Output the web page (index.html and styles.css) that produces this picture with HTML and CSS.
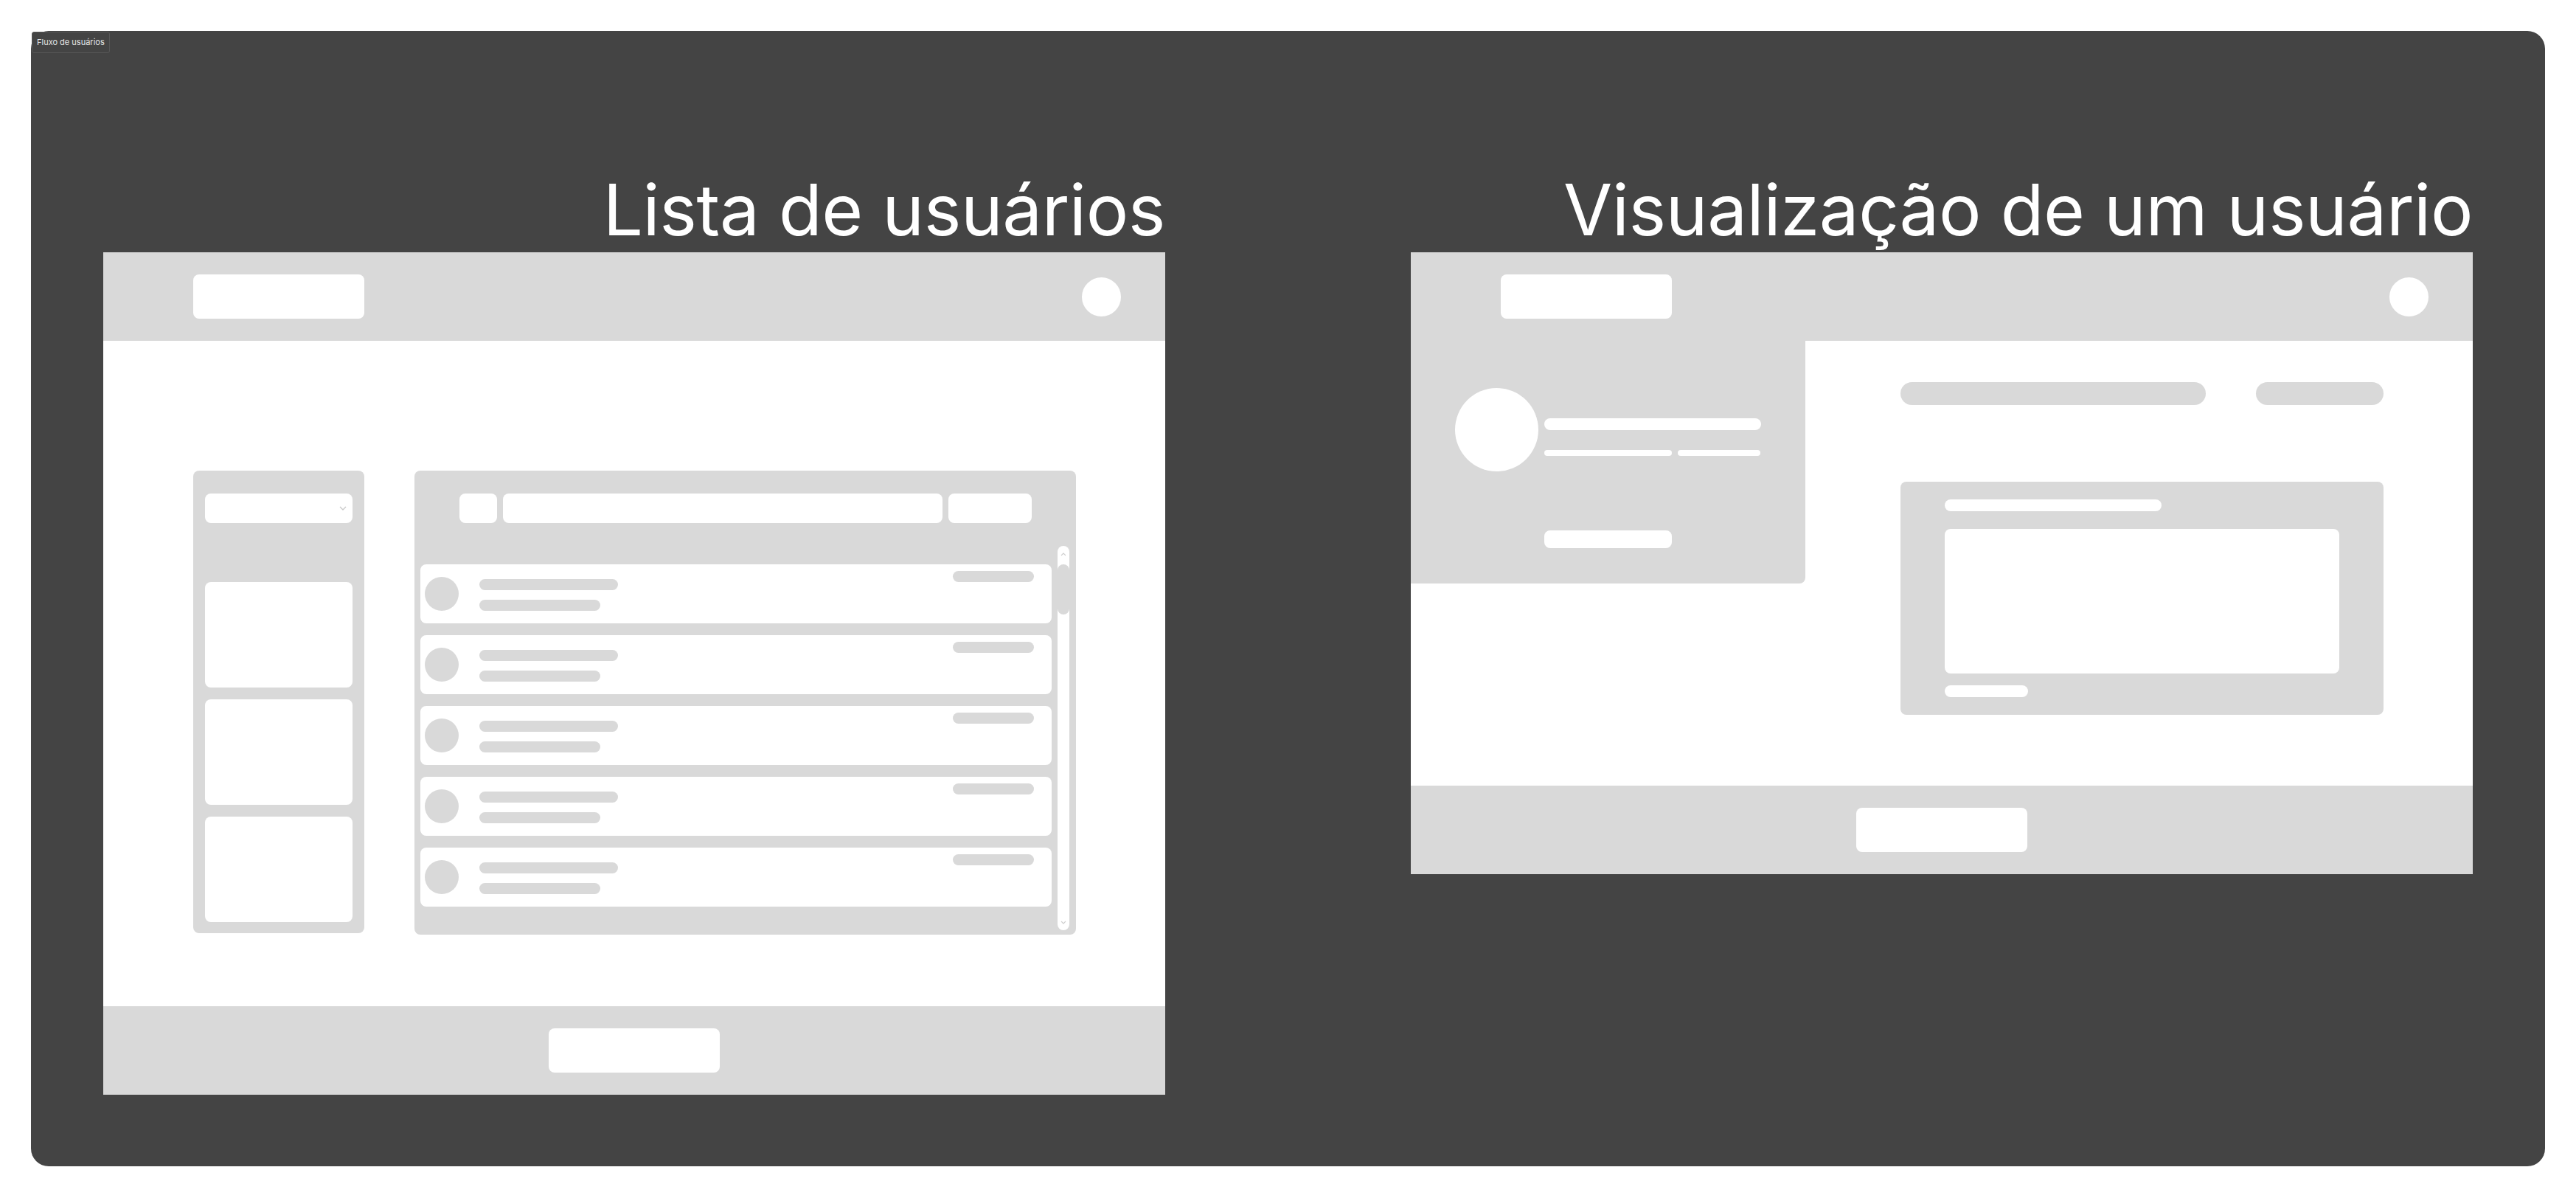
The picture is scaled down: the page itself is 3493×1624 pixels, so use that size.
FILE: index.html
```html
<!DOCTYPE html>
<html lang="pt-BR">
  <head>
    <meta charset="UTF-8" />
    <meta name="viewport" content="width=device-width, initial-scale=1.0" />
    <title>Fluxo de usuários</title>
    <link rel="stylesheet" href="styles.css">
  </head>
  <body>
    <div class="board">
      <div class="board-label">Fluxo de usuários</div>

      <!-- lista de usuarios -->
      <div class="column">
        <h1 class="screen-title">Lista de usuários</h1>
        <div class="mock">
          <div class="mock-header">
            <div class="logo"></div>
            <div class="avatar-sm"></div>
          </div>

          <div class="list-body">
            <div class="sidebar">
              <div class="select">
                <svg width="10" height="6" viewBox="0 0 10 6"><path d="M1 1l4 4 4-4" fill="none" stroke="#c9c9c9" stroke-width="1.3"/></svg>
              </div>
              <div class="side-cards">
                <div class="side-card"></div>
                <div class="side-card"></div>
                <div class="side-card"></div>
              </div>
            </div>

            <div class="list-panel">
              <div class="toolbar">
                <div class="tool-btn"></div>
                <div class="search"></div>
                <div class="tool-action"></div>
              </div>
              <div class="list-scroll">
                <div class="items">
                  <div class="item">
                    <div class="item-avatar"></div>
                    <div class="item-lines"><span class="ln ln-name"></span><span class="ln ln-sub"></span></div>
                    <span class="ln ln-tag"></span>
                  </div>
                  <div class="item">
                    <div class="item-avatar"></div>
                    <div class="item-lines"><span class="ln ln-name"></span><span class="ln ln-sub"></span></div>
                    <span class="ln ln-tag"></span>
                  </div>
                  <div class="item">
                    <div class="item-avatar"></div>
                    <div class="item-lines"><span class="ln ln-name"></span><span class="ln ln-sub"></span></div>
                    <span class="ln ln-tag"></span>
                  </div>
                  <div class="item">
                    <div class="item-avatar"></div>
                    <div class="item-lines"><span class="ln ln-name"></span><span class="ln ln-sub"></span></div>
                    <span class="ln ln-tag"></span>
                  </div>
                  <div class="item">
                    <div class="item-avatar"></div>
                    <div class="item-lines"><span class="ln ln-name"></span><span class="ln ln-sub"></span></div>
                    <span class="ln ln-tag"></span>
                  </div>
                </div>
                <div class="scrollbar">
                  <svg class="arrow" width="8" height="5" viewBox="0 0 8 5"><path d="M1 4l3-3 3 3" fill="none" stroke="#cfcfcf" stroke-width="1.2"/></svg>
                  <div class="thumb"></div>
                  <svg class="arrow arrow-down" width="8" height="5" viewBox="0 0 8 5"><path d="M1 1l3 3 3-3" fill="none" stroke="#cfcfcf" stroke-width="1.2"/></svg>
                </div>
              </div>
            </div>
          </div>

          <div class="mock-footer">
            <div class="footer-btn"></div>
          </div>
        </div>
      </div>

      <!-- visualizacao de um usuario -->
      <div class="column">
        <h1 class="screen-title">Visualização de um usuário</h1>
        <div class="mock">
          <div class="mock-header">
            <div class="logo"></div>
            <div class="avatar-sm"></div>
          </div>

          <div class="detail-body">
            <div class="profile">
              <div class="profile-avatar"></div>
              <div class="profile-info">
                <span class="pl pl-name"></span>
                <div class="pl-row">
                  <span class="pl pl-a"></span>
                  <span class="pl pl-b"></span>
                </div>
                <div class="profile-btn"></div>
              </div>
            </div>

            <div class="detail-content">
              <div class="bars">
                <span class="bar bar-wide"></span>
                <span class="bar bar-short"></span>
              </div>
              <div class="form-card">
                <span class="fc-line fc-label"></span>
                <div class="fc-area"></div>
                <span class="fc-line fc-foot"></span>
              </div>
            </div>
          </div>

          <div class="mock-footer">
            <div class="footer-btn"></div>
          </div>
        </div>
      </div>
    </div>
  </body>
</html>
```

FILE: styles.css
```css
body {
  margin: 0;
  background: #ffffff;
  font-family: Inter, "Noto Sans", sans-serif;
}

.board {
  position: relative;
  box-sizing: border-box;
  width: 3409px;
  height: 1539px;
  margin: 42px;
  padding: 194px 0 0 98px;
  background: #444444;
  border-radius: 24px;
  display: flex;
  align-items: flex-start;
  gap: 333px;
}

.board-label {
  position: absolute;
  top: 1px;
  left: 1px;
  height: 29px;
  box-sizing: border-box;
  padding: 0 6px;
  line-height: 27px;
  font-size: 11px;
  color: #e6e6e6;
  background: #444444;
  border: 1px solid #575757;
  border-radius: 3px;
}

.column {
  width: 1440px;
  display: flex;
  flex-direction: column;
}

.screen-title {
  margin: 0 0 10px;
  font-size: 96px;
  font-weight: 400;
  line-height: 96px;
  letter-spacing: -0.45px;
  color: #ffffff;
  text-align: right;
}

.mock {
  background: #ffffff;
}

.mock-header {
  height: 120px;
  background: #d9d9d9;
  display: flex;
  align-items: center;
  justify-content: space-between;
  padding: 0 60px 0 122px;
}

.logo {
  width: 232px;
  height: 60px;
  background: #ffffff;
  border-radius: 8px;
}

.avatar-sm {
  width: 53px;
  height: 53px;
  border-radius: 50%;
  background: #ffffff;
}

.mock-footer {
  height: 120px;
  background: #d9d9d9;
  display: flex;
  align-items: center;
  justify-content: center;
}

.footer-btn {
  width: 232px;
  height: 60px;
  background: #ffffff;
  border-radius: 8px;
}

/* lista */
.list-body {
  height: 902px;
  box-sizing: border-box;
  padding: 176px 121px 0 122px;
  display: flex;
  align-items: flex-start;
  gap: 68px;
}

.sidebar {
  width: 232px;
  box-sizing: border-box;
  padding: 31px 16px 15px;
  background: #d9d9d9;
  border-radius: 8px;
}

.select {
  height: 40px;
  background: #ffffff;
  border-radius: 8px;
  display: flex;
  align-items: center;
  justify-content: flex-end;
  padding-right: 8px;
}

.side-cards {
  margin-top: 80px;
  display: flex;
  flex-direction: column;
  gap: 16px;
}

.side-card {
  height: 143px;
  background: #ffffff;
  border-radius: 8px;
}

.list-panel {
  width: 897px;
  box-sizing: border-box;
  padding: 31px 9px 6px 8px;
  background: #d9d9d9;
  border-radius: 8px;
}

.toolbar {
  display: flex;
  gap: 8px;
  padding: 0 51px 0 53px;
}

.tool-btn,
.search,
.tool-action {
  height: 40px;
  background: #ffffff;
  border-radius: 8px;
}

.tool-btn { width: 51px; }
.search { flex: 1; }
.tool-action { width: 113px; }

.list-scroll {
  margin-top: 31px;
  display: flex;
  gap: 8px;
}

.items {
  flex: 1;
  padding-top: 25px;
  display: flex;
  flex-direction: column;
  gap: 16px;
}

.item {
  position: relative;
  height: 80px;
  background: #ffffff;
  border-radius: 8px;
  display: flex;
  align-items: center;
  padding-left: 6px;
}

.item-avatar {
  width: 46px;
  height: 46px;
  border-radius: 50%;
  background: #d9d9d9;
}

.item-lines {
  margin-left: 28px;
  display: flex;
  flex-direction: column;
  gap: 13px;
  padding-top: 3px;
}

.ln {
  display: block;
  height: 15px;
  border-radius: 8px;
  background: #d9d9d9;
}

.ln-name { width: 188px; }
.ln-sub { width: 164px; }

.ln-tag {
  position: absolute;
  top: 9px;
  right: 24px;
  width: 110px;
}

.scrollbar {
  width: 16px;
  height: 521px;
  background: #ffffff;
  border-radius: 8px;
  display: flex;
  flex-direction: column;
  align-items: center;
}

.arrow {
  margin-top: 9px;
  flex: none;
}

.thumb {
  margin-top: 11px;
  width: 16px;
  height: 68px;
  border-radius: 8px;
  background: #d9d9d9;
}

.arrow-down {
  margin-top: auto;
  margin-bottom: 8px;
}

/* visualizacao */
.detail-body {
  height: 603px;
  display: flex;
  align-items: flex-start;
}

.profile {
  width: 535px;
  box-sizing: border-box;
  padding: 64px 0 48px 60px;
  background: #d9d9d9;
  border-radius: 0 0 8px 0;
  display: flex;
  gap: 8px;
}

.profile-avatar {
  width: 113px;
  height: 113px;
  border-radius: 50%;
  background: #ffffff;
  flex: none;
}

.profile-info {
  padding-top: 41px;
}

.pl {
  display: block;
  background: #ffffff;
  border-radius: 8px;
}

.pl-name {
  width: 294px;
  height: 16px;
}

.pl-row {
  margin-top: 27px;
  display: flex;
  gap: 8px;
}

.pl-a { width: 173px; height: 8px; }
.pl-b { width: 112px; height: 8px; }

.profile-btn {
  margin-top: 101px;
  width: 173px;
  height: 24px;
  background: #ffffff;
  border-radius: 8px;
}

.detail-content {
  flex: 1;
  padding: 56px 121px 0 129px;
}

.bars {
  display: flex;
  justify-content: space-between;
}

.bar {
  height: 31px;
  border-radius: 16px;
  background: #d9d9d9;
}

.bar-wide { width: 414px; }
.bar-short { width: 173px; }

.form-card {
  margin-top: 104px;
  padding: 24px 60px;
  background: #d9d9d9;
  border-radius: 8px;
}

.fc-line {
  display: block;
  height: 16px;
  background: #ffffff;
  border-radius: 8px;
}

.fc-label { width: 294px; }
.fc-foot { width: 113px; }

.fc-area {
  margin: 24px 0 16px;
  height: 196px;
  background: #ffffff;
  border-radius: 8px;
}
```
